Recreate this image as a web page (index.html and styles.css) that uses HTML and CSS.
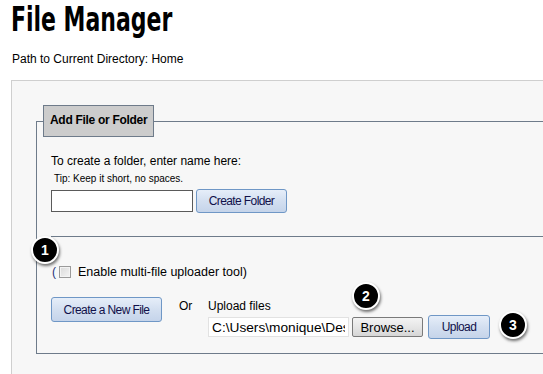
FILE: index.html
```html
<!DOCTYPE html>
<html lang="en">
<head>
<meta charset="utf-8">
<title>File Manager</title>
<link rel="stylesheet" href="styles.css">
</head>
<body>
<h1 class="title"><span class="title-text">File Manager</span></h1>
<p class="path">Path to Current Directory: Home</p>
<div class="panel">
  <fieldset class="box">
    <legend class="box-legend">Add File or Folder</legend>
    <p class="hint">To create a folder, enter name here:</p>
    <p class="tip">Tip: Keep it short, no spaces.</p>
    <div class="folder-row">
      <input class="name-input" type="text">
      <button class="btn btn-blue btn-folder">Create Folder</button>
    </div>
    <hr class="sep">
    <div class="multi"><span class="paren">(</span><span class="check"></span><span class="multi-text">Enable multi-file uploader tool)</span></div>
    <div class="file-row">
      <button class="btn btn-blue btn-new">Create a New File</button>
      <span class="or">Or</span>
      <div class="upload">
        <div class="upload-label">Upload files</div>
        <div class="upload-controls">
          <input class="file-path" type="text" value="C:\Users\monique\Desktop\report.docx" readonly>
          <button class="btn btn-gray btn-browse">Browse...</button>
          <button class="btn btn-blue btn-upload">Upload</button>
        </div>
      </div>
    </div>
  </fieldset>
  <span class="badge badge-1">1</span>
  <span class="badge badge-2">2</span>
  <span class="badge badge-3">3</span>
</div>
</body>
</html>
```

FILE: styles.css
```css
html, body {
  margin: 0;
  overflow: hidden;
}
body {
  padding: 0 0 0 11px;
  background: #fff;
  font-family: "Liberation Sans", Arial, sans-serif;
  font-size: 12px;
  color: #000;
}
.title {
  margin: 0;
  font-family: "DejaVu Sans Condensed", "DejaVu Sans", sans-serif;
  font-weight: bold;
  font-size: 33px;
  line-height: 40px;
  color: #000;
}
.title-text {
  display: inline-block;
  transform: scaleX(0.74);
  transform-origin: 0 50%;
}
.path {
  margin: 12px 0 0 1px;
  line-height: 14px;
}
.panel {
  position: relative;
  margin-top: 14px;
  width: 700px;
  border: 1px solid #cfcfcf;
  background: #f7f7f7;
  padding: 24px 0 40px 24px;
}
.box {
  margin: 0;
  border: 1px solid #6e7b8a;
  padding: 17px 0 14px 14px;
  min-width: 0;
}
.box-legend {
  margin-left: -8px;
  padding: 8px 6px 9px 6px;
  background: #cccccc;
  border: 1px solid #6e7b8a;
  font-weight: bold;
  font-size: 12px;
  letter-spacing: -0.3px;
  line-height: 13px;
}
.hint {
  margin: 0;
  line-height: 14px;
  font-size: 12px;
}
.tip {
  margin: 5px 0 0 3px;
  font-size: 10px;
  line-height: 12px;
}
.folder-row {
  display: flex;
  align-items: center;
  gap: 3px;
  margin-top: 4px;
  height: 24px;
}
.name-input {
  box-sizing: border-box;
  width: 142px;
  height: 22px;
  margin: 0;
  border: 1px solid #5a5a5a;
  background: #fff;
  padding: 0 3px;
}
.btn {
  box-sizing: border-box;
  margin: 0;
  font-family: "Liberation Sans", Arial, sans-serif;
  font-size: 12px;
  letter-spacing: -0.6px;
  color: #111;
  border-radius: 3px;
  padding: 0;
  cursor: pointer;
}
.btn-blue {
  border: 1px solid #6f97c6;
  background: linear-gradient(#e6eef9, #d3dff0 50%, #c5d4ea);
  color: #10104a;
}
.btn-folder {
  width: 91px;
  height: 24px;
}
.sep {
  margin: 23px 0 0 0;
  border: 0;
  border-top: 1px solid #6e7b8a;
  height: 0;
}
.multi {
  margin-top: 28px;
  display: flex;
  align-items: center;
  line-height: 14px;
  height: 14px;
}
.paren {
  margin-left: 1px;
  color: #1f2f7a;
}
.check {
  box-sizing: border-box;
  width: 12px;
  height: 12px;
  margin-left: 3px;
  border: 1px solid #9a9a9a;
  background: linear-gradient(135deg, #d9d9d9, #f4f4f4);
  box-shadow: inset 0 0 0 1px #f3f3f3;
}
.multi-text {
  margin-left: 7px;
  font-size: 12.5px;
}
.file-row {
  display: flex;
  align-items: flex-start;
  margin-top: 18px;
}
.btn-new {
  width: 111px;
  height: 25px;
}
.or {
  margin-left: 17px;
  padding-top: 2px;
  line-height: 14px;
  width: 29px;
}
.upload {
  display: flex;
  flex-direction: column;
}
.upload-label {
  padding-top: 2px;
  line-height: 14px;
}
.upload-controls {
  display: flex;
  align-items: center;
  margin-top: 2px;
  height: 24px;
}
.file-path {
  box-sizing: border-box;
  width: 141px;
  height: 20px;
  margin: 0;
  border: 1px solid #e2e2e2;
  background: #fff;
  padding: 0 3px;
  font-family: "Liberation Sans", Arial, sans-serif;
  font-size: 13.7px;
  color: #000;
}
.btn-gray {
  border: 1px solid #7a7a7a;
  background: linear-gradient(#f3f3f3, #e6e6e6 50%, #d6d6d6);
  color: #000;
  border-radius: 2px;
  font-size: 13px;
  letter-spacing: 0;
}
.btn-browse {
  width: 71px;
  height: 20px;
  margin-left: 3px;
}
.btn-upload {
  width: 62px;
  height: 24px;
  margin-left: 5px;
}
.badge {
  position: absolute;
  box-sizing: border-box;
  width: 28px;
  height: 28px;
  border-radius: 50%;
  background: #000;
  border: 2px solid #fff;
  box-shadow: 1px 2px 3px rgba(0, 0, 0, 0.55);
  color: #fff;
  font-weight: bold;
  font-size: 14px;
  line-height: 24px;
  text-align: center;
}
.badge-1 { left: 19px; top: 155px; }
.badge-2 { left: 340px; top: 201px; }
.badge-3 { left: 487px; top: 230px; }
```
